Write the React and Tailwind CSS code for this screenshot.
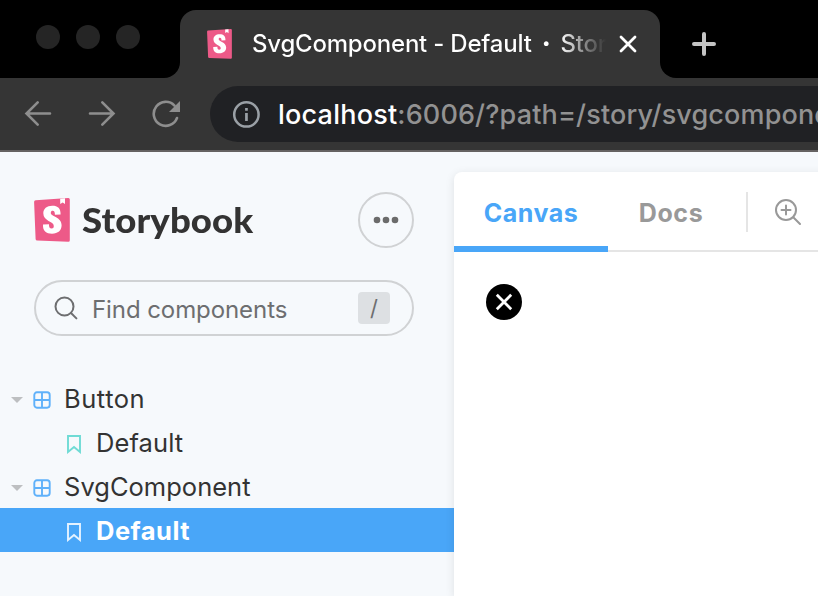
import React from "react";

const StorybookMark = ({ className }) => (
  <svg viewBox="0 0 36 44" className={className} preserveAspectRatio="none">
    <path d="M1.7 2.2 34.2.1Q35.8 0 35.8 1.6V42.2Q35.8 43.9 34.2 43.8L3.2 42.5Q1.7 42.4 1.6 40.9L.1 4Q0 2.4 1.7 2.2Z" fill="#ed5a88" />
    <path d="M26.2.7 31 .3V6.1L28.7 4.4 26.2 6Z" fill="#fff" />
    <path
      d="M26.6 16.4C26.7 10.4 24 7.8 18.2 7.8C12.8 7.8 9.3 10.8 9.3 15.3C9.3 23.5 19.8 23.2 19.8 28C19.8 29.7 19.1 30.5 17.7 30.5C15.5 30.5 14.9 28.9 15 26.2L9 26.5C8.6 33 12.2 35.7 18 35.7C23.9 35.7 27.6 32.5 27.6 27.3C27.6 18.7 16.8 18.7 16.8 15C16.8 13.3 17.6 12.8 18.7 12.8C20.3 12.8 20.9 14 20.9 16.8Z"
      fill="#fff"
    />
  </svg>
);

const Line = ({ className, children, viewBox = "0 0 28 28", width = 2.4 }) => (
  <svg viewBox={viewBox} className={className} fill="none" stroke="currentColor" strokeWidth={width} strokeLinecap="round">
    {children}
  </svg>
);

const Caret = () => (
  <svg viewBox="0 0 12 6" className="ml-[11px] h-[6px] w-3 shrink-0">
    <path d="M0 0H12L6 6Z" fill="#bdbfc1" />
  </svg>
);

const ComponentIcon = () => (
  <svg viewBox="0 0 18 18" className="ml-[10px] h-[18px] w-[18px] shrink-0" fill="none" stroke="#5fb1fa" strokeWidth="1.9">
    <rect x="1.3" y="1.3" width="15.4" height="15.4" rx="2.6" />
    <path d="M9 1V17M1 9H17" />
  </svg>
);

const Bookmark = ({ className }) => (
  <svg viewBox="0 0 14 19" className={"ml-[67px] mt-[5px] h-[19px] w-[14px] shrink-0 " + className} fill="none" stroke="currentColor" strokeWidth="1.9">
    <path d="M1 1H13V17L7 12 1 17Z" />
  </svg>
);

function BrowserChrome() {
  return (
    <header className="h-[152px] border-b-2 border-[#656262] bg-[#353535]">
      <div className="flex h-[78px] bg-black">
        <div className="flex w-[164px] gap-4 pl-9 pt-[25px]">
          <i className="h-6 w-6 rounded-full bg-[#252525]" />
          <i className="h-6 w-6 rounded-full bg-[#252525]" />
          <i className="h-6 w-6 rounded-full bg-[#252525]" />
        </div>
        <div className="w-4 self-end bg-[#353535]">
          <div className="h-4 rounded-br-2xl bg-black" />
        </div>
        <div className="mt-[10px] flex w-[480px] items-center rounded-t-2xl bg-[#353535] pl-[27px]">
          <StorybookMark className="h-[30px] w-[25px]" />
          <div className="ml-5 w-[354px] overflow-hidden whitespace-pre bg-gradient-to-r from-white from-[87%] to-[#353535] to-[100%] bg-clip-text text-[24px] font-[450] leading-8 tracking-[-0.21px] text-transparent">
            SvgComponent - Default<span className="mx-[10px] inline-block font-black">·</span>Storybook
          </div>
          <Line className="ml-[13px] h-[18px] w-[18px] text-white" viewBox="0 0 18 18" width={2.8}>
            <path d="M2 2 16 16M16 2 2 16" />
          </Line>
        </div>
        <div className="w-4 self-end bg-[#353535]">
          <div className="h-4 rounded-bl-2xl bg-black" />
        </div>
        <Line className="ml-4 mt-8 h-6 w-6 text-[#c4c4c4]" viewBox="0 0 24 24" width={4}>
          <path d="M12 2V22M2 12H22" />
        </Line>
      </div>
      <div className="flex h-[72px] items-center overflow-hidden text-[#8e8e8e]">
        <Line className="ml-6 h-7 w-7 shrink-0" width={2.6}>
          <path d="M26 13.5H3M13.7 2.3 2.5 13.5 13.7 24.7" />
        </Line>
        <Line className="ml-9 h-7 w-7 shrink-0" width={2.6}>
          <path d="M2 13.5H25M14.3 2.3 25.5 13.5 14.3 24.7" />
        </Line>
        <svg viewBox="0 0 28 28" className="ml-9 h-7 w-7 shrink-0">
          <path d="M25 18A12 12 0 1 1 22.5 5.6" fill="none" stroke="currentColor" strokeWidth="2.6" strokeLinecap="round" />
          <path d="M28 1V12H17Z" fill="currentColor" />
        </svg>
        <div className="ml-[30px] flex h-14 w-[640px] shrink-0 items-center rounded-l-full bg-[#202124] pl-[22px]">
          <svg viewBox="0 0 28 28" className="h-7 w-7 shrink-0 text-[#9aa0a6]" fill="currentColor">
            <circle cx="14.4" cy="14.4" r="12.2" fill="none" stroke="currentColor" strokeWidth="2.5" />
            <path d="M13.1 8H15.8V10.8H13.1ZM13.1 13H15.8V21H13.1Z" />
          </svg>
          <div className="ml-[18px] mt-[2px] whitespace-nowrap text-[27px] leading-8">
            <span className="font-medium tracking-[0.22px] text-white">localhost</span>
            <span className="font-[450] tracking-[0.14px] text-[#929292]">:6006/?path=/story/svgcomponent--default</span>
          </div>
        </div>
      </div>
    </header>
  );
}

function Sidebar() {
  return (
    <aside className="w-[454px] shrink-0 text-[26px] text-[#333]">
      <div className="flex items-center pl-[34px] pt-10">
        <StorybookMark className="h-11 w-9" />
        <div className="-mt-[2px] ml-3 w-[264px] origin-left scale-x-[1.045] font-['Lato'] text-[35px] font-black leading-[56px] tracking-[0.1px]">Storybook</div>
        <div className="ml-3 flex h-14 w-14 shrink-0 items-center justify-center rounded-full border-2 border-[#d0d2d4]">
          <svg viewBox="0 0 26 8" className="h-2 w-[26px]" fill="#6b6b6b">
            <circle cx="4" cy="4" r="3.3" />
            <circle cx="13" cy="4" r="3.3" />
            <circle cx="22" cy="4" r="3.3" />
          </svg>
        </div>
      </div>
      <div className="ml-[34px] mt-8 flex h-14 w-[380px] items-center rounded-full border-2 border-[#d0d2d4] pl-[18px] text-[#6d6e70]">
        <Line className="h-6 w-6" viewBox="0 0 24 24" width={2}>
          <circle cx="10.5" cy="10.5" r="9" />
          <path d="M17 17 22.4 22.4" />
        </Line>
        <span className="ml-[14px] mt-[4px] w-[266px] text-[24px] tracking-[-0.08px]">Find components</span>
        <span className="flex h-8 w-8 shrink-0 items-center justify-center rounded bg-[#dde0e3] text-[22px]">/</span>
      </div>
      <div className="mt-10 text-[25.5px]">
        <div className="flex h-11 items-center pt-1"><Caret /><ComponentIcon /><span className="-mt-[2px] ml-[13px] tracking-[0.55px]">Button</span></div>
        <div className="flex h-11 items-center"><Bookmark className="text-[#6fdbd5]" /><span className="ml-[15px] mt-[2px] tracking-[0.1px]">Default</span></div>
        <div className="flex h-11 items-center pt-1"><Caret /><ComponentIcon /><span className="-mt-[2px] ml-[13px] tracking-[0.02px]">SvgComponent</span></div>
        <div className="flex h-11 items-center bg-[#49a6f8] font-bold text-white"><Bookmark className="text-[#e4f2ff]" /><span className="ml-[15px] mt-[2px] tracking-[0.5px]">Default</span></div>
      </div>
    </aside>
  );
}

function Preview() {
  return (
    <main className="mt-5 w-[400px] shrink-0 rounded-tl-lg bg-white shadow-[0_2px_10px_rgba(0,0,0,0.10)]">
      <div className="flex h-20 border-b-2 border-[#e5e5e5] text-[25px] font-bold">
        <div className="-mb-[2px] flex w-[154px] items-center justify-center rounded-tl-lg border-b-[6px] border-[#49a6f8] pt-[9px] tracking-[0.5px] text-[#49a6f8]">Canvas</div>
        <div className="flex w-[126px] items-center justify-center pt-[6px] tracking-[0.6px] text-[#999]">Docs</div>
        <div className="ml-3 mt-5 h-10 w-[2px] bg-[#e5e5e5]" />
        <Line className="ml-[26px] mt-[26px] h-7 w-7 text-[#999]" width={2}>
          <circle cx="12" cy="12" r="10" />
          <path d="M7.5 12H16.5M12 7.5V16.5M19.5 19.5 26 26" />
        </Line>
      </div>
      <div className="p-8">
        <svg viewBox="0 0 36 36" className="h-9 w-9">
          <circle cx="18" cy="18" r="18" fill="#000" />
          <path d="M10.8 10.8 25.2 25.2M25.2 10.8 10.8 25.2" stroke="#fff" strokeWidth="2.8" />
        </svg>
      </div>
    </main>
  );
}

export default function App() {
  return (
    <div className="h-[596px] w-[818px] overflow-hidden bg-[#f6f9fc] font-['Inter',sans-serif]">
      <BrowserChrome />
      <div className="flex h-[444px]">
        <Sidebar />
        <Preview />
      </div>
    </div>
  );
}
